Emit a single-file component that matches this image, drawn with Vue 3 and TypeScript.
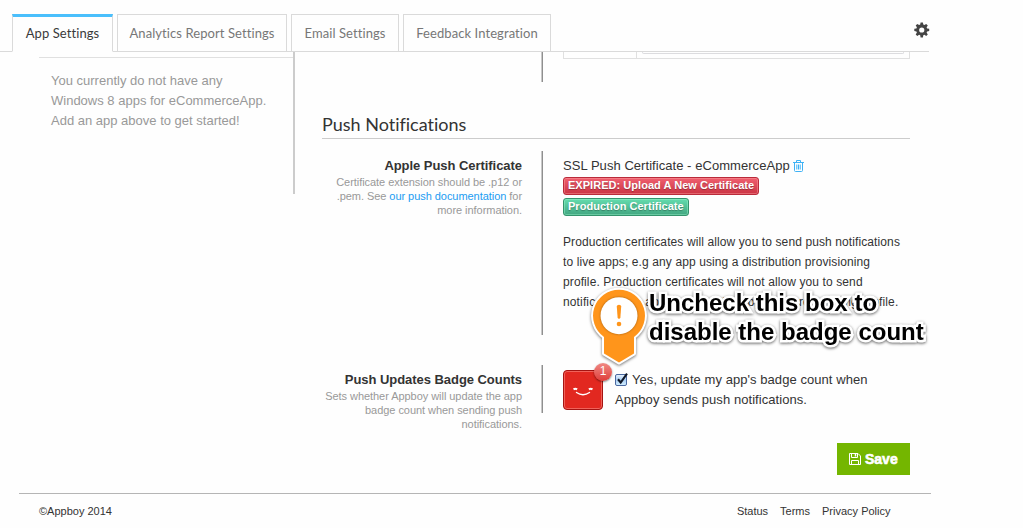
<script setup lang="ts">
import { ref } from 'vue'

interface Tab {
  label: string
  width: number
}

const tabs: Tab[] = [
  { label: 'App Settings', width: 101 },
  { label: 'Analytics Report Settings', width: 170 },
  { label: 'Email Settings', width: 108 },
  { label: 'Feedback Integration', width: 148 },
]
const active = ref(0)
const badgeEnabled = ref(true)
const footerLinks: string[] = ['Status', 'Terms', 'Privacy Policy']
</script>

<template>
  <div class="page">
    <header class="topbar">
      <nav class="tabs">
        <button
          v-for="(tab, i) in tabs"
          :key="tab.label"
          class="tab"
          :class="{ active: i === active }"
          :style="{ width: tab.width + 'px' }"
          @click="active = i"
        >{{ tab.label }}</button>
      </nav>
      <svg class="gear" viewBox="0 0 16 16" width="16" height="16">
        <path
          fill="#444"
          fill-rule="evenodd"
          d="M6.6 .5h2.3l.4 2.1 1.1.5 1.8-1.2 1.6 1.6-1.2 1.8.5 1.1 2.1.4v2.3l-2.1.4-.5 1.1 1.2 1.8-1.6 1.6-1.8-1.2-1.1.5-.4 2.1H6.6l-.4-2.1-1.1-.5-1.8 1.2-1.6-1.6 1.2-1.8-.5-1.1-2.1-.4V6.8l2.1-.4.5-1.1-1.2-1.8 1.6-1.6 1.8 1.2 1.1-.5zM7.75 5.4a2.6 2.6 0 1 0 0 5.2 2.6 2.6 0 0 0 0-5.2z"
        />
      </svg>
    </header>

    <div class="body">
      <aside class="sidebar">
        <p>You currently do not have any<br />Windows 8 apps for eCommerceApp.<br />Add an app above to get started!</p>
      </aside>

      <main class="content">
        <div class="row previous">
          <div class="label"></div>
          <div class="value">
            <div class="table-end">
              <div class="cell-key"></div>
              <div class="cell-input"><i></i></div>
            </div>
          </div>
        </div>

        <h2>Push Notifications</h2>

        <div class="row certificate">
          <div class="label">
            <strong>Apple Push Certificate</strong>
            <small>Certificate extension should be .p12 or<br />.pem. See <a>our push documentation</a> for<br />more information.</small>
          </div>
          <div class="value">
            <div class="cert-name">
              <span>SSL Push Certificate - eCommerceApp</span>
              <svg class="trash" viewBox="0 0 11 12" width="11" height="12" fill="none" stroke="#3fb2f5">
                <path d="M0 2.5h11M3.5 2V.5h4V2M1.5 3v7.5q0 1 1 1h6q1 0 1-1V3M3.8 4.5v5M5.5 4.5v5M7.2 4.5v5" />
              </svg>
            </div>
            <div class="pill red"><span>EXPIRED: Upload A New Certificate</span></div>
            <div class="pill green"><span>Production Certificate</span></div>
            <p class="about">Production certificates will allow you to send push notifications<br />to live apps; e.g any app using a distribution provisioning<br />profile. Production certificates will not allow you to send<br /><span class="last">notifications to apps using a development provisioning profile.</span></p>
          </div>
        </div>

        <div class="row badge-row">
          <div class="label">
            <strong>Push Updates Badge Counts</strong>
            <small>Sets whether Appboy will update the app<br />badge count when sending push<br />notifications.</small>
          </div>
          <div class="value badge-value">
            <div class="app-icon">
              <svg viewBox="0 0 40 40" width="40" height="40" fill="none" stroke="#fff">
                <path d="M13.500 22.500q6.500 4.500 13 0" stroke-width="1.400" stroke-linecap="round" />
                <path d="M10.500 19.200q2-.9 3.600.2M25.900 19.400q1.600-1.100 3.600-.2" stroke-width="2.100" />
              </svg>
              <span class="count">1</span>
            </div>
            <div class="option" @click="badgeEnabled = !badgeEnabled">
              <svg class="check" viewBox="0 0 14 14" width="14" height="14">
                <defs>
                  <linearGradient id="box" x2="0" y2="1">
                    <stop stop-color="#eaf4fe" />
                    <stop offset=".5" stop-color="#a9cdf3" />
                    <stop offset="1" stop-color="#d4f0ff" />
                  </linearGradient>
                </defs>
                <rect x=".5" y="2.500" width="11" height="11" rx="1.500" fill="url(#box)" stroke="#4a68a0" />
                <path v-if="badgeEnabled" d="M3 7.300l2.700 3.200L12 1.600" fill="none" stroke="#101828" stroke-width="2.100" />
              </svg>
              <span class="line-a">Yes, update my app's badge count when</span><br />
              <span class="line-b">Appboy sends push notifications.</span>
            </div>
          </div>
        </div>

        <div class="actions">
          <button class="save">
            <svg viewBox="0 0 12 12" width="12" height="12" fill="none" stroke="#fff">
              <path d="M.5.5h8.500l2.500 2.500v8.500H.5zM2.500 1v3.500h6V1M2.500 11V7.500h7V11" />
              <path d="M6.500 1v2.500" stroke-width="1.500" />
            </svg>
            <span>Save</span>
          </button>
        </div>
      </main>
    </div>

    <footer class="footer">
      <span>©Appboy 2014</span>
      <nav><a v-for="link in footerLinks" :key="link">{{ link }}</a></nav>
    </footer>

    <div class="callout">
      <svg class="pin" viewBox="0 0 64 88" width="64" height="88">
        <path
          class="pin-shape"
          d="M32 5.700a26 26 0 0 1 15 47.200V69.500L32 78.500 17 69.500V52.900A26 26 0 0 1 32 5.700z"
          fill="#ff951b"
          stroke="#fff"
          stroke-width="4"
          stroke-linejoin="round"
        />
        <circle class="pin-face" cx="32" cy="31.700" r="18.500" fill="#fff" />
        <path d="M29.800 22.500q0-1.800 2.200-1.800t2.200 1.800l-.8 11q-.2 1.200-1.400 1.200t-1.400-1.200z" fill="#ff951b" />
        <circle cx="32" cy="40" r="2.300" fill="#ff951b" />
      </svg>
      <div class="callout-text">Uncheck this box to<br />disable the badge count</div>
    </div>
  </div>
</template>

<style>
body {
  margin: 0;
  background: #fefefe;
}
</style>

<style scoped>
.page {
  position: relative;
  width: 1023px;
  height: 528px;
  overflow: hidden;
  background: #fefefe;
  color: #333;
  font-family: 'Liberation Sans', Arial, sans-serif;
}
button {
  padding: 0;
  margin: 0;
  border: 0;
  background: none;
  font: inherit;
}
p {
  margin: 0;
}
.topbar {
  box-sizing: border-box;
  display: flex;
  justify-content: space-between;
  width: 929px;
  height: 52px;
  padding: 14px 0 0 12px;
  border-bottom: 1px solid #dadada;
}
.tabs {
  display: flex;
  gap: 4px;
}
.tab {
  box-sizing: border-box;
  height: 38px;
  border: 1px solid #dadada;
  color: #777;
  font-family: Lato, sans-serif;
  font-size: 13px;
  line-height: 36px;
  letter-spacing: 0.08px;
  white-space: nowrap;
}
.tab.active {
  padding-bottom: 2px;
  border-top: 3px solid #4abffc;
  border-bottom-color: #fefefe;
  color: #3a3a3a;
  line-height: 32px;
}
.gear {
  margin: 8px -0.5px 0 0;
}
.body {
  display: flex;
  height: 441px;
}
.sidebar {
  box-sizing: border-box;
  width: 256px;
  height: 142px;
  margin-left: 39px;
  padding-top: 5px;
  border-right: 2px solid #ccc;
}
.sidebar p {
  padding: 13px 0 0 12px;
  border-top: 1px solid #e0e0e0;
  color: #999;
  font-size: 13px;
  line-height: 20px;
  white-space: nowrap;
}
.content {
  width: 588px;
  margin-left: 27px;
}
.row {
  display: flex;
}
.label {
  box-sizing: border-box;
  width: 221px;
  padding-right: 19px;
  background: linear-gradient(to right, #c8c8c8 50%, #8f8f8f 50%) right / 2px 100% no-repeat;
  border-right: 2px solid transparent;
  background-origin: border-box;
  text-align: right;
  white-space: nowrap;
}
.label strong {
  display: block;
  font-size: 13px;
  line-height: 20px;
  letter-spacing: -0.05px;
}
.label small {
  display: block;
  margin-top: -1px;
  color: #999;
  font-size: 11px;
  line-height: 14px;
  letter-spacing: -0.05px;
}
.label a {
  color: #1b9cf2;
}
.value {
  width: 347px;
  margin-left: 20px;
  white-space: nowrap;
}
.previous {
  height: 30px;
}
.table-end {
  box-sizing: border-box;
  display: flex;
  height: 7px;
  border: 1px solid #e0e0e0;
  border-top: 0;
}
.cell-key {
  width: 72px;
  border-right: 1px solid #e0e0e0;
}
.cell-input {
  flex: 1;
}
.cell-input i {
  display: block;
  height: 1px;
  margin: 0 5px;
  border: 1px solid #dcdcdf;
  border-top: 0;
  border-radius: 0 0 3px 3px;
}
h2 {
  box-sizing: border-box;
  height: 57px;
  margin: 0 0 12px;
  padding-top: 30px;
  border-bottom: 1px solid #ccc;
  font-family: Lato, sans-serif;
  font-size: 18px;
  font-weight: 400;
  font-variant-ligatures: none;
  line-height: 24px;
}
.certificate {
  height: 184px;
}
.certificate .label,
.certificate .value {
  padding-top: 5px;
}
.certificate .label {
  height: 184px;
}
.cert-name {
  display: flex;
  align-items: center;
  gap: 4px;
  height: 20px;
  font-size: 13px;
  line-height: 18px;
  letter-spacing: 0.05px;
}
.trash {
  margin: -1px 0 0 -0.5px;
}
.pill {
  box-sizing: border-box;
  width: max-content;
  height: 18px;
  margin-top: 1px;
  padding: 0 4px;
  border: 1px solid;
  border-radius: 3px;
  color: #fff;
  font-size: 11px;
  font-weight: 700;
  line-height: 15px;
  letter-spacing: 0.035px;
  text-shadow: 0 1px 1px rgba(0, 0, 0, 0.3);
}
.pill.red {
  border-color: #b92b3b;
  background: linear-gradient(#f06070, #cb3444);
  box-shadow: inset 0 0 0 1px rgba(255, 160, 160, 0.45);
}
.pill.green {
  margin-top: 3px;
  border-color: #35936d;
  background: linear-gradient(#64dcae, #43a681);
  box-shadow: inset 0 0 0 1px rgba(160, 255, 210, 0.4);
}
.about {
  margin-top: 16px;
  font-size: 12px;
  line-height: 20px;
  letter-spacing: 0.105px;
}
.last {
  letter-spacing: 0.135px;
}
.badge-row {
  height: 48px;
  margin-top: 30px;
}
.badge-row .label,
.badge-row .value {
  padding-top: 5px;
}
.badge-value {
  display: flex;
}
.app-icon {
  position: relative;
  box-sizing: border-box;
  width: 40px;
  height: 40px;
  border: 1px solid #a51412;
  border-radius: 4px;
  background: #e22820;
  box-shadow: inset 0 0 0 1px #f0625a;
}
.app-icon svg {
  display: block;
  margin: -1px;
}
.count {
  position: absolute;
  top: -8px;
  right: -10px;
  width: 18px;
  height: 18px;
  border-radius: 50%;
  background: linear-gradient(#f08a85, #df3d39);
  box-shadow: 0 1px 2px rgba(0, 0, 0, 0.5);
  color: #fff;
  font-size: 12px;
  line-height: 17px;
  text-align: center;
}
.option {
  margin-left: 12px;
  font-size: 13px;
  line-height: 20px;
  letter-spacing: 0.06px;
}
.check {
  margin-right: 3px;
  vertical-align: -2px;
}
.actions {
  display: flex;
  justify-content: flex-end;
  margin-top: 30px;
}
.save {
  display: flex;
  align-items: center;
  gap: 4px;
  width: 73px;
  height: 32px;
  padding-left: 12px;
  background: #74b600;
  color: #fff;
  font-size: 14px;
  font-weight: 700;
  letter-spacing: 0;
  -webkit-text-stroke: 0.6px #fff;
}
.footer {
  box-sizing: border-box;
  display: flex;
  justify-content: space-between;
  width: 912px;
  margin-left: 19px;
  padding: 0 40.5px 0 20px;
  border-top: 1px solid #b5b5b5;
  font-size: 11px;
  line-height: 35px;
}
.footer nav {
  display: flex;
  gap: 12px;
}
.callout {
  position: absolute;
  top: 284px;
  left: 587px;
  display: flex;
}
.pin {
  flex: none;
  overflow: visible;
}
.pin-shape {
  paint-order: stroke fill;
  filter: drop-shadow(0 1px 1.5px rgba(0, 0, 0, 0.55));
}
.pin-face {
  filter: drop-shadow(0 0 1px rgba(90, 50, 0, 0.6));
}
.callout-text {
  margin: 4px 0 0 -2px;
  color: #000;
  font-size: 24px;
  font-weight: 700;
  line-height: 29px;
  white-space: nowrap;
  -webkit-text-stroke: 5px #fff;
  paint-order: stroke fill;
  filter: drop-shadow(0 1px 1.5px rgba(0, 0, 0, 0.6));
}
</style>
